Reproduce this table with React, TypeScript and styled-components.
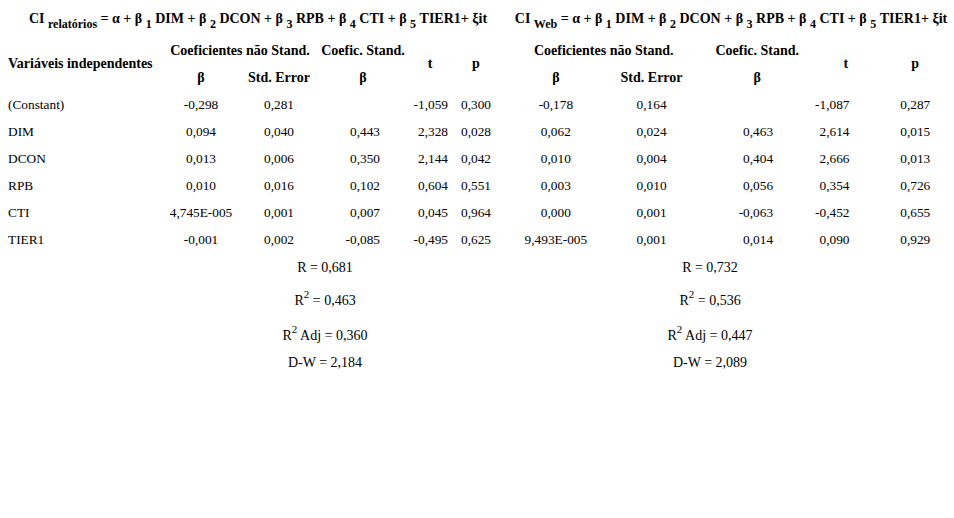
import React from "react";
import styled, { createGlobalStyle } from "styled-components";

type Row = { label: string; values: string[] };

const leftRows: Row[] = [
  { label: "(Constant)", values: ["-0,298", "0,281", "", "-1,059", "0,300"] },
  { label: "DIM", values: ["0,094", "0,040", "0,443", "2,328", "0,028"] },
  { label: "DCON", values: ["0,013", "0,006", "0,350", "2,144", "0,042"] },
  { label: "RPB", values: ["0,010", "0,016", "0,102", "0,604", "0,551"] },
  { label: "CTI", values: ["4,745E-005", "0,001", "0,007", "0,045", "0,964"] },
  { label: "TIER1", values: ["-0,001", "0,002", "-0,085", "-0,495", "0,625"] },
];

const rightRows: Row[] = [
  { label: "", values: ["-0,178", "0,164", "", "-1,087", "0,287"] },
  { label: "", values: ["0,062", "0,024", "0,463", "2,614", "0,015"] },
  { label: "", values: ["0,010", "0,004", "0,404", "2,666", "0,013"] },
  { label: "", values: ["0,003", "0,010", "0,056", "0,354", "0,726"] },
  { label: "", values: ["0,000", "0,001", "-0,063", "-0,452", "0,655"] },
  { label: "", values: ["9,493E-005", "0,001", "0,014", "0,090", "0,929"] },
];

type Col = { width: number; align: "left" | "center" | "right"; pad: number };

const leftCols: Col[] = [
  { width: 78, align: "center", pad: 0 },
  { width: 78, align: "center", pad: 0 },
  { width: 90, align: "right", pad: 28 },
  { width: 44, align: "right", pad: 4 },
  { width: 48, align: "center", pad: 0 },
];

const rightCols: Col[] = [
  { width: 96, align: "center", pad: 0 },
  { width: 96, align: "center", pad: 0 },
  { width: 116, align: "right", pad: 42 },
  { width: 60, align: "right", pad: 27 },
  { width: 78, align: "center", pad: 0 },
];

const GlobalStyle = createGlobalStyle`
  html, body {
    margin: 0;
    padding: 0;
    background: #ffffff;
  }
  body {
    font-family: "Liberation Serif", "Times New Roman", serif;
    color: #000000;
  }
`;

type Stats = { r: string; r2: string; adj: string; dw: string };

const Equation: React.FC<{ name: string }> = ({ name }) => (
  <>
    CI <Sub>{name}</Sub> = α + β <Sub>1</Sub> DIM + β <Sub>2</Sub> DCON + β{" "}
    <Sub>3</Sub> RPB + β <Sub>4</Sub> CTI + β <Sub>5</Sub> TIER1+ ξit
  </>
);

const Results: React.FC<{
  name: string;
  rows: Row[];
  cols: Col[];
  withLabels: boolean;
  stats: Stats;
  labelWidth: number;
  statsOffset: number;
  statsWidth: number;
  titleShift: number;
  panelWidth: number;
}> = (p) => (
  <Panel $width={p.panelWidth}>
    <Title $shift={p.titleShift}>
      <Equation name={p.name} />
    </Title>
    <Table>
      <colgroup>
        {p.withLabels && <col style={{ width: p.labelWidth }} />}
        {p.cols.map((c, i) => (
          <col key={i} style={{ width: c.width }} />
        ))}
      </colgroup>
      <thead>
        <tr>
          {p.withLabels && (
            <Head rowSpan={2} $align="left" $pad={0}>
              Variáveis independentes
            </Head>
          )}
          <Head colSpan={2} $align="center" $pad={0}>
            Coeficientes não Stand.
          </Head>
          <Head $align="center" $pad={0}>
            Coefic. Stand.
          </Head>
          <Head rowSpan={2} $align="center" $pad={0}>
            t
          </Head>
          <Head rowSpan={2} $align="center" $pad={0}>
            p
          </Head>
        </tr>
        <tr>
          <Head $align="center" $pad={0}>β</Head>
          <Head $align="center" $pad={0}>Std. Error</Head>
          <Head $align="center" $pad={0}>β</Head>
        </tr>
      </thead>
      <tbody>
        {p.rows.map((row, r) => (
          <tr key={r}>
            {p.withLabels && <Cell $align="left" $pad={0}>{row.label}</Cell>}
            {row.values.map((v, i) => (
              <Cell key={i} $align={p.cols[i].align} $pad={p.cols[i].pad}>
                {v}
              </Cell>
            ))}
          </tr>
        ))}
      </tbody>
    </Table>
    <Summary $offset={p.statsOffset} $width={p.statsWidth}>
      <StatLine $height={28}>
        <span>R = {p.stats.r}</span>
      </StatLine>
      <StatLine $height={33}>
        <span>
          R<Sup>2</Sup> = {p.stats.r2}
        </span>
      </StatLine>
      <StatLine $height={35}>
        <span>
          R<Sup>2</Sup> Adj = {p.stats.adj}
        </span>
      </StatLine>
      <StatLine $height={27}>
        <span>D-W = {p.stats.dw}</span>
      </StatLine>
    </Summary>
  </Panel>
);

const App: React.FC = () => (
  <Page>
    <GlobalStyle />
    <Results
      name="relatórios"
      rows={leftRows}
      cols={leftCols}
      withLabels
      labelWidth={154}
      stats={{ r: "0,681", r2: "0,463", adj: "0,360", dw: "2,184" }}
      statsOffset={142}
      statsWidth={350}
      titleShift={8}
      panelWidth={500}
    />
    <Results
      name="Web"
      rows={rightRows}
      cols={rightCols}
      withLabels={false}
      labelWidth={0}
      stats={{ r: "0,732", r2: "0,536", adj: "0,447", dw: "2,089" }}
      statsOffset={0}
      statsWidth={404}
      titleShift={0}
      panelWidth={454}
    />
  </Page>
);

const Page = styled.div`
  display: flex;
  width: 954px;
  height: 518px;
  overflow: hidden;
`;

const Panel = styled.div<{ $width: number }>`
  width: ${(p) => p.$width}px;
  flex: none;
  padding-left: 8px;
  box-sizing: border-box;
`;

const Title = styled.div<{ $shift: number }>`
  height: 37px;
  line-height: 37px;
  padding-left: ${(p) => p.$shift}px;
  text-align: center;
  font-size: 14px;
  font-weight: 700;
  white-space: nowrap;
`;

const Sub = styled.span`
  font-size: 12px;
  line-height: 0;
  vertical-align: -5px;
`;

const Table = styled.table`
  border-collapse: collapse;
  table-layout: fixed;
  border-spacing: 0;
`;

const Head = styled.th<{ $align: string; $pad: number }>`
  height: 27px;
  padding: 0 ${(p) => p.$pad}px 0 0;
  text-align: ${(p) => p.$align};
  vertical-align: middle;
  font-size: 14px;
  font-weight: 700;
  white-space: nowrap;
`;

const Cell = styled.td<{ $align: string; $pad: number }>`
  height: 27px;
  padding: 0 ${(p) => p.$pad}px 0 0;
  text-align: ${(p) => p.$align};
  vertical-align: middle;
  font-size: 13.33px;
  white-space: nowrap;
`;

const Summary = styled.div<{ $offset: number; $width: number }>`
  margin-left: ${(p) => p.$offset}px;
  width: ${(p) => p.$width}px;
`;

const StatLine = styled.div<{ $height: number }>`
  height: ${(p) => p.$height}px;
  box-sizing: border-box;
  padding-top: ${(p) => p.$height - 20}px;
  text-align: center;
  font-size: 14px;
  line-height: 14px;
  white-space: nowrap;
`;

const Sup = styled.span`
  font-size: 11px;
  line-height: 0;
  vertical-align: 7px;
`;

export default App;
